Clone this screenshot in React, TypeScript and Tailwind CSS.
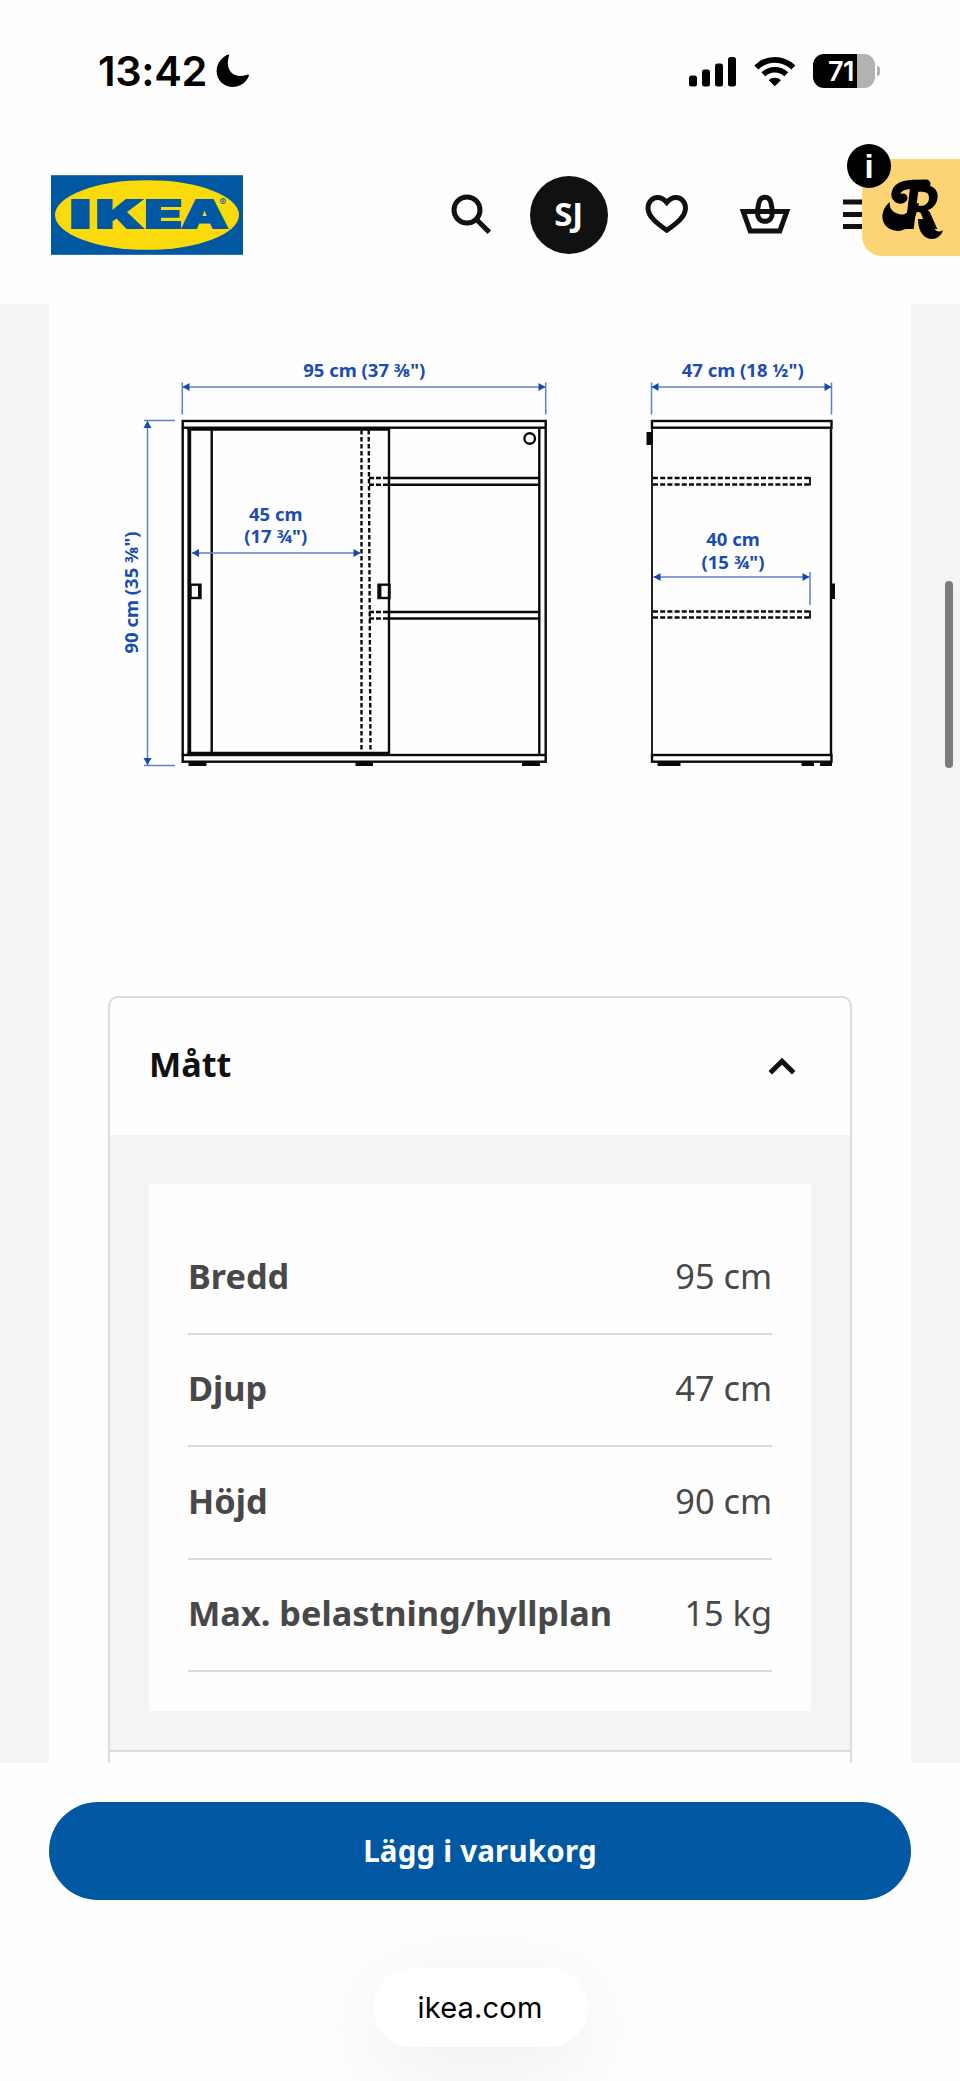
import { useState } from 'react';

interface Measurement {
  label: string;
  value: string;
}

const measurements: Measurement[] = [
  { label: 'Bredd', value: '95 cm' },
  { label: 'Djup', value: '47 cm' },
  { label: 'Höjd', value: '90 cm' },
  { label: 'Max. belastning/hyllplan', value: '15 kg' },
];

const navButton = 'flex flex-1 items-center justify-center';

function StatusBar() {
  return (
    <div className="flex h-[142px] items-center justify-between pl-[98px] pr-[80px]">
      <div className="flex items-center gap-[9px]">
        <span className="pt-[2px] font-['Inter'] text-[41.5px] font-semibold leading-none tracking-[-0.3px]">13:42</span>
        <svg width="34" height="34" viewBox="0 0 34 34">
          <path
            d="M13 .6C13.700 1.200 11.800 4.400 11.800 9C11.800 16.800 17 22 24.500 22C29.300 22 31.800 20.100 32.800 20.700C33.800 21.300 29.200 33 16.800 33C7.800 33 .6 26.200 .6 17C.6 6 11.500 -.4 13 .6Z"
            fill="#000"
          />
        </svg>
      </div>
      <div className="flex items-center">
        <svg width="48" height="31" viewBox="0 0 48 31" fill="#000">
          <rect x="0" y="19.500" width="8" height="11" rx="2.500" />
          <rect x="13" y="13.500" width="8" height="17" rx="2.500" />
          <rect x="26" y="7.500" width="8" height="23" rx="2.500" />
          <rect x="39" y="1" width="8" height="29.500" rx="2.500" />
        </svg>
        <svg className="ml-[17px]" width="42" height="31" viewBox="0 0 42 31" fill="none" stroke="#000">
          <path d="M2.300 11.500C12.500 1.200 29 1.200 39.300 11.500" strokeWidth="5.800" />
          <path d="M9.300 18.300C15.800 12.200 25.800 12.200 32.300 18.300" strokeWidth="5.600" />
          <path d="M20.800 30.300L14.800 24.200C18 21 23.600 21 26.800 24.200Z" fill="#000" stroke="none" />
        </svg>
        <div className="ml-[17px] flex h-[34px] w-[62px] items-center overflow-hidden rounded-[11px] bg-[linear-gradient(to_right,#000_44px,#b2b2b2_44px)] pl-[15px]">
          <span className="font-['Inter'] text-[27px] font-semibold leading-none tracking-[-0.5px] text-white">71</span>
        </div>
        <div className="ml-[2px] h-[10px] w-[3px] rounded-r-full bg-[#b2b2b2]" />
      </div>
    </div>
  );
}

function Logo() {
  return (
    <svg width="192" height="80" viewBox="0 0 193 80">
      <rect width="193" height="80" fill="#0058a3" />
      <ellipse cx="96.500" cy="40" rx="92.500" ry="35" fill="#fbda0c" />
      <g fill="#0058a3" stroke="#0058a3" strokeWidth="1.800" fontFamily="Inter" fontWeight="900" fontSize="38.500">
        <text x="18.500" y="53.300" textLength="22" lengthAdjust="spacingAndGlyphs">I</text>
        <text x="45" y="53.300" textLength="48" lengthAdjust="spacingAndGlyphs">K</text>
        <text x="94" y="53.300" textLength="38" lengthAdjust="spacingAndGlyphs">E</text>
        <text x="131" y="53.300" textLength="47" lengthAdjust="spacingAndGlyphs">A</text>
      </g>
      <text x="169.500" y="30.500" fontFamily="Inter" fontSize="10" fill="#0058a3">®</text>
    </svg>
  );
}

function Header() {
  return (
    <header className="flex h-[162px] items-center justify-between pb-4 pl-[51px] pr-[48px]">
      <Logo />
      <nav className="flex w-[489px]">
        <button className={navButton}>
          <svg width="59" height="59" viewBox="0 0 59 59" fill="none" stroke="#111" strokeWidth="5">
            <circle cx="25" cy="24" r="13" />
            <path d="M34 33L47.300 46.200" />
          </svg>
        </button>
        <button className={navButton}>
          <span className="mr-[2px] flex h-[78px] w-[78px] items-center justify-center rounded-full bg-[#111] pb-[3px] text-[33px] font-bold text-white">
            SJ
          </span>
        </button>
        <button className={navButton}>
          <svg width="59" height="59" viewBox="0 0 59 59" fill="none" stroke="#111" strokeWidth="5">
            <path d="M28.800 16.500C26 13.300 23.200 11.500 19.700 11.500C14 11.500 10 16.300 10 22C10 30.500 18.500 37 28.800 44.300C39.100 37 47.500 30.500 47.500 22C47.500 16.300 43.500 11.500 37.900 11.500C34.500 11.500 31.500 13.300 28.800 16.500Z" />
          </svg>
        </button>
        <button className={navButton}>
          <svg width="59" height="59" viewBox="0 0 59 59" fill="none" stroke="#111" strokeWidth="5">
            <path d="M7.200 25.500H50.800L43.800 45H14.200Z" />
            <path d="M28.900 11.200C32.500 11.200 34.300 13.500 35 17C35.700 20 36.300 23.500 36.300 27C36.300 32 33.500 35.300 28.900 35.300C24.300 35.300 21.500 32 21.500 27C21.500 23.500 22.100 20 22.800 17C23.500 13.500 25.300 11.200 28.900 11.200Z" />
          </svg>
        </button>
        <button className={navButton}>
          <svg width="59" height="59" viewBox="0 0 59 59" stroke="#111" strokeWidth="5">
            <path d="M9 16H49M9 28.500H49M9 40.500H49" />
          </svg>
        </button>
      </nav>
    </header>
  );
}

// Floating extension tab stuck to the right edge
function SideBadge() {
  return (
    <div className="absolute right-0 top-[159px] h-[97px] w-[98px] rounded-l-[20px] bg-[#fdd475]">
      <svg width="98" height="97" viewBox="0 0 98 97">
        <text x="41" y="70" fontFamily="Lato" fontWeight="900" fontStyle="italic" fontSize="60">R</text>
        {/* swashes */}
        <path d="M28 43C16 52 18 71 36 72C50 71 54 58 57 44L49 46C47 54 42 57 37 55C30 53 27 49 28 43Z" />
        <path
          d="M41 39C38 42 33 39 34 34C36 25 48 25 64 25"
          fill="none"
          stroke="#000"
          strokeWidth="9"
          strokeLinecap="round"
        />
        <path d="M56 60C56 85 78 84 81 71C76 75 70 71 69 60Z" />
      </svg>
      <span className="absolute -left-[15px] -top-[15px] flex h-11 w-11 items-center justify-center rounded-full bg-black font-['Liberation_Sans'] text-[33px] font-bold leading-none text-white">
        i
      </span>
    </div>
  );
}

interface ArrowProps {
  x1: number;
  y1: number;
  x2: number;
  y2: number;
}

function Arrow({ x1, y1, x2, y2 }: ArrowProps) {
  const vertical = x1 === x2;
  const heads = vertical
    ? `M${x1} ${y1}l-4 7h8zM${x2} ${y2}l-4 -7h8z`
    : `M${x1} ${y1}l7 -4v8zM${x2} ${y2}l-7 -4v8z`;
  return (
    <>
      <path d={`M${x1} ${y1}L${x2} ${y2}`} stroke="#5f80cb" strokeWidth="1.500" />
      <path d={heads} fill="#1549b0" />
    </>
  );
}

function DimensionDrawing() {
  return (
    <svg className="block" width="862" height="692" viewBox="49 304 862 692" fill="none">
      {/* front view */}
      <g stroke="#0a0a0a" strokeWidth="2.400">
        <rect x="182.700" y="421" width="363" height="6.700" />
        <path d="M182.700 428V755M545.700 428V755M539.300 428V755" />
        <rect x="182.700" y="755" width="363" height="6.700" />
        <path d="M187.500 429H389.300" strokeWidth="3.500" />
        <path d="M189.300 429V755" strokeWidth="3.800" />
        <path d="M187.500 753.500H389.300" strokeWidth="3.500" />
        <path d="M389 429V755" />
        <path d="M211.700 429V753" />
        <path d="M389 478H539M389 484.700H539M389 612H539M389 618.500H539" />
        <path d="M361.500 430V753M368.700 430L370.500 753" strokeDasharray="4.500 2.500" />
        <path d="M369 478H389M369 484.700H389M369 612H389M369 618.500H389" strokeDasharray="5 2" />
        <rect x="190.500" y="584.700" width="10" height="13.300" />
        <path d="M199.500 584V599" strokeWidth="3" />
        <rect x="378.500" y="584.700" width="11" height="13.300" />
        <path d="M379.700 584V599" strokeWidth="3.400" />
        <circle cx="529.700" cy="438.500" r="5.300" strokeWidth="2.400" />
        <path d="M188.500 764H206.500M355.500 764H373M522 764H540" strokeWidth="4" />
      </g>
      {/* side view */}
      <g stroke="#0a0a0a" strokeWidth="2.400">
        <rect x="652" y="421" width="179.500" height="6.700" />
        <path d="M652 428V755" strokeWidth="1.800" />
        <path d="M831 428V755" />
        <rect x="652" y="755" width="179.500" height="6.700" />
        <path d="M653 478H810M653 484.500H810M653 611.500H810M653 617.500H810" strokeDasharray="5 2.200" />
        <path d="M810 477V485.500M810 610.500V618.500" strokeWidth="1.800" />
        <rect x="647.700" y="433.200" width="4" height="10.600" fill="#0a0a0a" />
        <path d="M833 583.500V599" strokeWidth="4" />
        <path d="M657.500 764H680.500M801.500 764H814M820 764H832" strokeWidth="4" />
      </g>
      {/* extension lines */}
      <path
        d="M182.300 382.500V414.500M545.700 382.500V414.500M651.500 382.500V414.500M831.500 382.500V414.500M144 420.500H175M144 765.500H175M810 572V605"
        stroke="#5f80cb"
        strokeWidth="1.500"
      />
      <Arrow x1={182.500} y1={387} x2={545.500} y2={387} />
      <Arrow x1={651.500} y1={387} x2={831.500} y2={387} />
      <Arrow x1={147.500} y1={421} x2={147.500} y2={765} />
      <Arrow x1={192} y1={553} x2={360.500} y2={553} />
      <Arrow x1={653.500} y1={577} x2={809.500} y2={577} />
      <g fill="#1a4cb2" fontFamily="Noto Sans" fontWeight="700" fontSize="18.500" textAnchor="middle">
        <text x="364.300" y="377.300">95 cm (37 ⅜")</text>
        <text x="742.700" y="377.300">47 cm (18 ½")</text>
        <text x="275.700" y="521">45 cm</text>
        <text x="275.700" y="543">(17 ¾")</text>
        <text x="733" y="546.300">40 cm</text>
        <text x="733" y="568.500">(15 ¾")</text>
        <text transform="translate(138 592.500) rotate(-90)">90 cm (35 ⅜")</text>
      </g>
    </svg>
  );
}

export default function App() {
  const [isOpen, setIsOpen] = useState(true);

  return (
    <div className="relative flex h-[2081px] w-[960px] flex-col overflow-hidden bg-[#fefefe] font-['Noto_Sans',sans-serif] text-black">
      <StatusBar />
      <Header />

      <main className="h-[1459px] overflow-hidden bg-[#f4f4f4] px-[49px]">
        <div className="h-full bg-[#fefefe]">
          <DimensionDrawing />
          <section className="ml-[59px] mr-[59px] h-[800px] rounded-t-[10px] border-2 border-[#dcdcdc]">
            <button
              onClick={() => setIsOpen(!isOpen)}
              className="flex h-[137px] w-full items-center justify-between pl-[39px] pr-[54px]"
            >
              <span className="pb-[4px] text-[34.2px] font-bold leading-none text-[#111]">Mått</span>
              <svg className="mb-[2px]" width="28" height="18" viewBox="0 0 28 18" fill="none" stroke="#111" strokeWidth="5">
                <path d="M2.300 15.800L14 4.200L25.700 15.800" />
              </svg>
            </button>
            {isOpen && (
              <div className="border-b-2 border-[#dcdcdc] bg-[#f4f4f4] px-[39px] pb-[39px] pt-[49px]">
                <dl className="bg-[#fefefe] px-[39px] pb-[39px] pt-[38px] text-[34.3px] leading-none text-[#484848]">
                  {measurements.map((item) => (
                    <div
                      key={item.label}
                      className="flex h-[112.6px] items-center justify-between border-b-2 border-[#dcdcdc] pb-[3px]"
                    >
                      <dt className="font-bold">{item.label}</dt>
                      <dd>{item.value}</dd>
                    </div>
                  ))}
                </dl>
              </div>
            )}
          </section>
        </div>
      </main>

      <div className="px-[49px] pt-[39px]">
        <button className="flex h-[98px] w-full items-center justify-center rounded-full bg-[#0058a3] pt-[1px] text-[29.5px] font-bold tracking-[0.2px] text-white">
          Lägg i varukorg
        </button>
      </div>

      <div className="flex justify-center pt-[68px]">
        <div className="flex h-[79px] w-[215px] items-center justify-center rounded-full bg-white font-['Inter'] text-[29px] tracking-[0.2px] shadow-[0_20px_90px_rgba(0,0,0,0.07)]">
          ikea.com
        </div>
      </div>

      <SideBadge />
      <div className="absolute right-[7px] top-[581px] h-[187px] w-[8px] rounded-full bg-[#7b7b7b]" />
    </div>
  );
}
